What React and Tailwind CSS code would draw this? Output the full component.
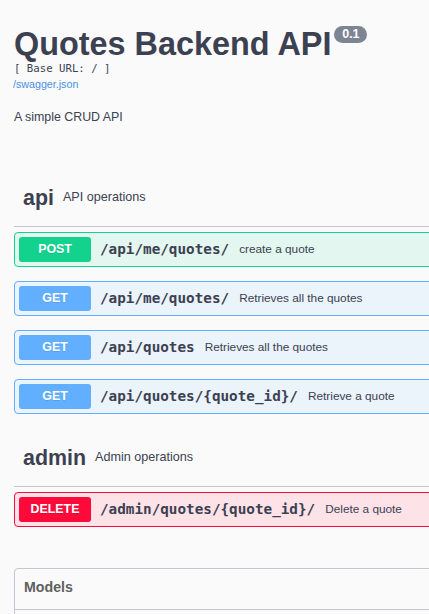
import React from "react";

const sans = { fontFamily: '"Liberation Sans", Arial, sans-serif' };

const methods = {
  POST: { border: "border-[#12d28e]", bg: "bg-[#e3f6ef]", badge: "bg-[#12d28e]" },
  GET: { border: "border-[#61affe]", bg: "bg-[#ebf3fb]", badge: "bg-[#61affe]" },
  DELETE: { border: "border-[#fd0a3b]", bg: "bg-[#fde2e7]", badge: "bg-[#fd0a3b]" },
};

function Op({ method, path, desc, className = "" }) {
  const m = methods[method];
  return (
    <div className={`flex h-[35px] items-center rounded-[4px] border p-[4px] ${m.border} ${m.bg} ${className}`}>
      <div
        className={`flex h-[25px] w-[72px] shrink-0 items-center justify-center rounded-[3px] text-[12.4px] font-bold text-white ${m.badge} [text-shadow:0_1px_0_rgba(0,0,0,0.1)]`}
      >
        {method}
      </div>
      <span className="ml-[9px] font-['DejaVu_Sans_Mono',monospace] text-[14.3px] font-bold text-[#3b4151]">
        {path}
      </span>
      <span className="ml-[10px] text-[11.8px] text-[#3b4151]">{desc}</span>
    </div>
  );
}

function Tag({ name, desc, className = "" }) {
  return (
    <div className={`flex h-[53px] items-center border-b border-[#c5c7cc] pb-[5px] pl-[9px] ${className}`}>
      <span className="text-[21.4px] font-bold leading-[26px] text-[#3b4151]">{name}</span>
      <span className="ml-[9px] text-[12.6px] text-[#3b4151]">{desc}</span>
    </div>
  );
}

export default function App() {
  return (
    <div className="h-screen w-full overflow-hidden bg-[#fafafa]" style={sans}>
      <div className="w-[480px] pl-[14px] pt-[28px]">
        <div className="flex items-start">
          <h2 className="text-[32.4px] font-bold leading-[32px] text-[#3b4151]">Quotes Backend API</h2>
          <span className="ml-[3px] -mt-[2px] flex h-[17px] w-[33px] items-center justify-center rounded-full bg-[#7d8492] text-[12.5px] font-bold text-white">
            0.1
          </span>
        </div>
        <div className="mt-[2px] font-['DejaVu_Sans_Mono',monospace] text-[10.7px] leading-[14px] text-[#3b4151]">
          [ Base URL: / ]
        </div>
        <div className="mt-[1px] -ml-[1px] text-[10.7px] leading-[14px] text-[#4990e2]">/swagger.json</div>
        <div className="mt-[18px] text-[12.4px] leading-[16px] text-[#3b4151]">A simple CRUD API</div>

        <Tag name="api" desc="API operations" className="mt-[49px]" />
        <div className="mt-[5px] flex flex-col gap-[14px]">
          <Op method="POST" path="/api/me/quotes/" desc="create a quote" />
          <Op method="GET" path="/api/me/quotes/" desc="Retrieves all the quotes" />
          <Op method="GET" path="/api/quotes" desc="Retrieves all the quotes" />
          <Op method="GET" path="/api/quotes/{quote_id}/" desc="Retrieve a quote" />
        </div>

        <Tag name="admin" desc="Admin operations" className="mt-[20px]" />
        <div className="mt-[5px] flex flex-col gap-[14px]">
          <Op method="DELETE" path="/admin/quotes/{quote_id}/" desc="Delete a quote" />
        </div>

        <div className="mt-[41px] rounded-[4px] border border-[#c5c7cc]">
          <div className="flex h-[41px] items-center border-b border-[#c5c7cc] pl-[9px] pb-[2px] text-[14.2px] font-bold text-[#606060]">
            Models
          </div>
          <div className="h-[120px]" />
        </div>
      </div>
    </div>
  );
}
